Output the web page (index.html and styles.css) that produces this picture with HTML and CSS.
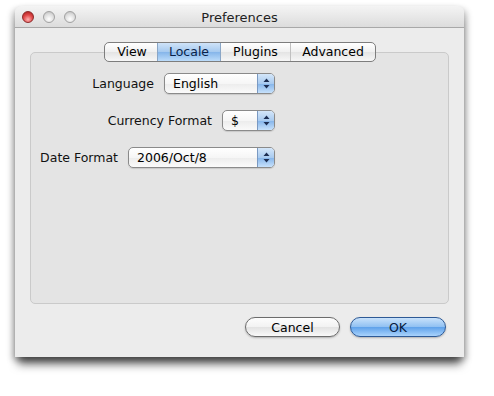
FILE: index.html
```html
<!DOCTYPE html>
<html>
<head>
<meta charset="utf-8">
<link rel="stylesheet" href="styles.css">
</head>
<body>
<div class="window">
  <div class="titlebar">
    <div class="lights">
      <span class="light red"></span>
      <span class="light"></span>
      <span class="light"></span>
    </div>
    <div class="title">Preferences</div>
  </div>
  <div class="content">
    <div class="tabs">
      <span class="tab">View</span>
      <span class="tab sel">Locale</span>
      <span class="tab">Plugins</span>
      <span class="tab">Advanced</span>
    </div>
    <div class="box">
      <div class="rows">
        <div class="row">
          <span class="label">Language</span>
          <span class="popup w-lang"><span class="val">English</span><span class="step"><svg width="7" height="11" viewBox="0 0 7 11"><path d="M3.5 0.5L6.5 4H0.5Z M3.5 10.5L6.5 7H0.5Z" fill="#1d2e52"/></svg></span></span>
        </div>
        <div class="row">
          <span class="label">Currency Format</span>
          <span class="popup w-cur"><span class="val">$</span><span class="step"><svg width="7" height="11" viewBox="0 0 7 11"><path d="M3.5 0.5L6.5 4H0.5Z M3.5 10.5L6.5 7H0.5Z" fill="#1d2e52"/></svg></span></span>
        </div>
        <div class="row">
          <span class="label">Date Format</span>
          <span class="popup w-date"><span class="val">2006/Oct/8</span><span class="step"><svg width="7" height="11" viewBox="0 0 7 11"><path d="M3.5 0.5L6.5 4H0.5Z M3.5 10.5L6.5 7H0.5Z" fill="#1d2e52"/></svg></span></span>
        </div>
      </div>
    </div>
    <div class="buttons">
      <span class="btn">Cancel</span>
      <span class="btn ok">OK</span>
    </div>
  </div>
</div>
</body>
</html>
```
FILE: styles.css
```css
html, body {
  margin: 0;
  padding: 0;
  background: #ffffff;
}
body {
  font-family: "DejaVu Sans", "Liberation Sans", sans-serif;
  font-size: 12.5px;
  color: #000;
  padding: 6px 0 40px 15px;
}
.window {
  width: 449px;
  height: 351px;
  background: #ececec;
  border-radius: 6px 6px 0 0;
  box-shadow: 0 10px 10px -3px rgba(0,0,0,0.6), -3px 3px 6px rgba(0,0,0,0.22), 3px 3px 6px rgba(0,0,0,0.22);
  display: flex;
  flex-direction: column;
  box-sizing: border-box;
}
.titlebar {
  height: 22px;
  border-radius: 6px 6px 0 0;
  background: linear-gradient(#f4f4f4, #dcdcdc);
  border-bottom: 1px solid #a8a8a8;
  display: flex;
  align-items: center;
  position: relative;
  box-sizing: border-box;
}
.lights {
  display: flex;
  gap: 9px;
  padding-left: 7px;
  padding-top: 1px;
}
.light {
  width: 12px;
  height: 12px;
  border-radius: 50%;
  box-sizing: border-box;
  border: 1px solid #a2a2a2;
  background: radial-gradient(circle at 50% 70%, #ffffff 0%, #dedede 55%, #b8b8b8 100%);
}
.light.red {
  border-color: #8c2a2a;
  background: radial-gradient(circle at 50% 75%, #ffb0b0 0%, #e04a4a 50%, #a51717 100%);
}
.title {
  position: absolute;
  left: 0;
  right: 0;
  top: 4px;
  text-align: center;
  font-size: 13px;
  color: #222;
}
.content {
  flex: 1;
  display: flex;
  flex-direction: column;
  padding: 14px 15px 0 15px;
}
.tabs {
  align-self: center;
  display: flex;
  height: 20px;
  box-sizing: border-box;
  border: 1px solid #7d7d7d;
  border-radius: 5px;
  background: linear-gradient(#ffffff, #f0f0f0 50%, #e4e4e4 51%, #f7f7f7);
  position: relative;
  z-index: 1;
  overflow: hidden;
  margin-left: 1px;
}
.tab {
  display: flex;
  align-items: center;
  justify-content: center;
  border-left: 1px solid #c0c0c0;
  line-height: 18px;
  box-sizing: border-box;
}
.tab:first-child {
  border-left: none;
  padding-left: 2px;
}
.tab:nth-child(1) { width: 52px; }
.tab:nth-child(2) { width: 64px; }
.tab:nth-child(3) { width: 69px; }
.tab:nth-child(4) { width: 85px; }
.tab.sel {
  background: linear-gradient(#cfe3f8, #a5c9ef 50%, #85b5ea 51%, #bcdcfa);
  border-left-color: #8aa6c6;
  border-right: 1px solid #8aa6c6;
  color: #0a1f48;
}
.tab.sel + .tab { border-left: none; }
.box {
  margin-top: -10px;
  height: 252px;
  box-sizing: border-box;
  border: 1px solid #cacaca;
  border-radius: 5px;
  background: #e4e4e4;
  padding-top: 20px;
}
.rows {
  width: 244px;
  display: flex;
  flex-direction: column;
  gap: 16px;
}
.row {
  display: flex;
  justify-content: flex-end;
  align-items: center;
  gap: 10px;
  height: 21px;
}
.label {
  color: #111;
}
.popup {
  height: 21px;
  box-sizing: border-box;
  border: 1px solid #8a8a8a;
  border-radius: 5px;
  background: linear-gradient(#ffffff, #f6f6f6 50%, #ececec 51%, #fafafa);
  display: flex;
  align-items: center;
  overflow: hidden;
  box-shadow: 0 1px 1px rgba(0,0,0,0.12);
}
.val {
  flex: 1;
  padding-left: 8px;
}
.step {
  width: 16px;
  height: 100%;
  border-left: 1px solid #7a99c2;
  background: linear-gradient(#d4e6f9, #a9cbf0 50%, #84b4ea 51%, #c7e1fb);
  display: flex;
  align-items: center;
  justify-content: center;
}
.w-lang { width: 111px; }
.w-cur { width: 53px; }
.w-date { width: 147px; }
.buttons {
  display: flex;
  justify-content: flex-end;
  gap: 10px;
  padding: 13px 3px 0 0;
}
.btn {
  width: 95px;
  height: 20px;
  box-sizing: border-box;
  border: 1px solid #6c6c6c;
  border-radius: 10px;
  background: linear-gradient(#fdfdfd, #f2f2f2 50%, #e2e2e2 51%, #f9f9f9);
  display: flex;
  align-items: center;
  justify-content: center;
  box-shadow: 0 1px 2px rgba(0,0,0,0.25);
}
.btn.ok {
  width: 96px;
  border-color: #2e5a96;
  background: linear-gradient(#c9e2fb, #8fc0f2 50%, #5ea1ea 51%, #a9d3fc);
  color: #061a3d;
}
```
